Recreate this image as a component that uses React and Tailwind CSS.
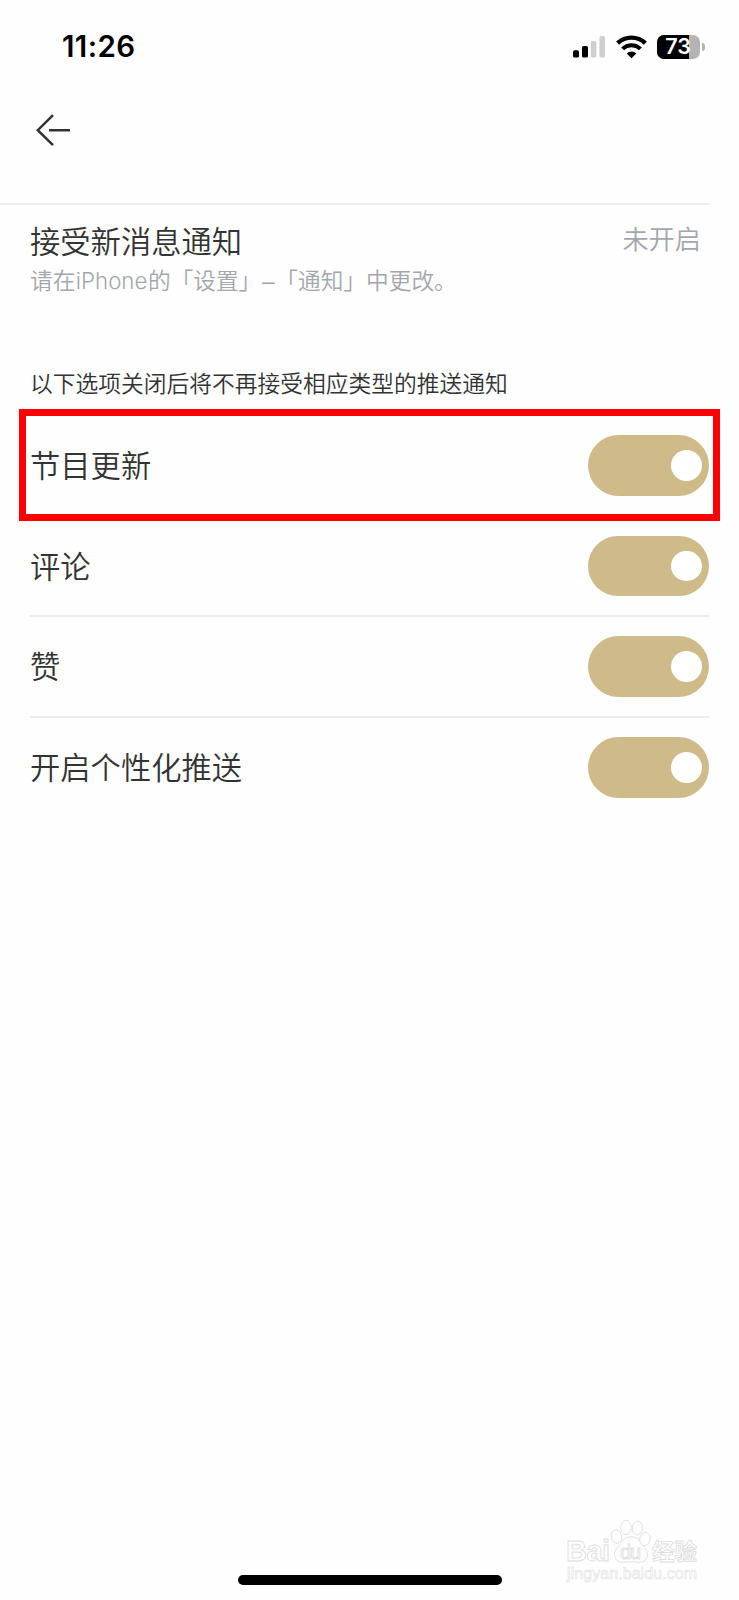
import React, { useState } from 'react';

const OPTIONS = [
    { key: 'program', label: '节目更新', divider: false },
    { key: 'comment', label: '评论', divider: true },
    { key: 'like', label: '赞', divider: true },
    { key: 'personal', label: '开启个性化推送', divider: false },
];

function StatusBar() {
    return (
        <div className="flex h-[94px] items-center justify-between pr-[34px] pl-[62px] text-black">
            <div className="font-['Inter'] text-[29.5px] leading-none font-semibold tracking-[0.4px]">11:26</div>
            <div className="flex items-center">
                {/* Signal */}
                <svg width="33" height="22" viewBox="0 0 33 22">
                    <rect x="0" y="14.2" width="6" height="7.4" rx="1.6" />
                    <rect x="9" y="10" width="6" height="11.6" rx="1.6" />
                    <rect x="17.8" y="5" width="5.6" height="16.6" rx="1.6" fill="#cfcfcf" />
                    <rect x="26.4" y="0" width="5.6" height="21.6" rx="1.6" fill="#cfcfcf" />
                </svg>
                {/* Wifi */}
                <svg className="ml-[10px]" width="31" height="24" viewBox="0 0 31 24" fill="none" stroke="#000">
                    <path d="M1.6 8.200a20.200 20.200 0 0 1 27.800 0" strokeWidth="4.400" />
                    <path d="M6.600 13.900a12.600 12.600 0 0 1 17.800 0" strokeWidth="4" />
                    <path d="M15.500 23.200l-4.800-4.800a6.800 6.800 0 0 1 9.600 0z" fill="#000" stroke="none" />
                </svg>
                {/* Battery */}
                <div className="relative ml-[10px] flex h-6 w-[43px] items-center justify-center overflow-hidden rounded-[7px] bg-[#b4b4b4]">
                    <div className="absolute inset-y-0 left-0 w-8 bg-black" />
                    <span className="relative -ml-px font-['Inter'] text-[21.5px] leading-none font-semibold text-white">73</span>
                </div>
                <div className="ml-[2px] h-2 w-[3px] rounded-r-full bg-[#b4b4b4]" />
            </div>
        </div>
    );
}

function Toggle({ checked, onChange }) {
    return (
        <button
            type="button"
            role="switch"
            aria-checked={checked}
            onClick={onChange}
            className={`flex h-[60.6px] w-[121.4px] items-center rounded-full px-[7.5px] ${
                checked ? 'justify-end bg-[#cfbb89]' : 'justify-start bg-gray-300'
            }`}
        >
            <span className="size-[30.6px] rounded-full bg-white" />
        </button>
    );
}

function Watermark() {
    return (
        <svg
            className="absolute right-[32px] bottom-[14px]"
            width="141"
            height="70"
            viewBox="0 0 141 70"
            fill="#fefefe"
            stroke="#dedede"
            strokeWidth="0.9"
        >
            <text x="0" y="45" fontFamily="Liberation Sans" fontWeight="700" fontSize="29" textLength="44">Bai</text>
            <ellipse cx="50.500" cy="20.500" rx="5.200" ry="6.800" transform="rotate(-12 50.500 20.500)" />
            <ellipse cx="60" cy="11.500" rx="5.200" ry="7.200" />
            <ellipse cx="71.500" cy="12" rx="5.200" ry="7" transform="rotate(8 71.500 12)" />
            <ellipse cx="79" cy="23" rx="5.200" ry="6.800" transform="rotate(14 79 23)" />
            <path d="M57 24.500c4-5 12-5 16 0 3 5 8 8 8.500 13 .5 6-4 9.500-9 8.800-6-.8-9-.8-15 0-5 .7-9.500-3-9-8.800.5-5 5.500-8 8.500-13z" />
            <text x="54" y="42.500" fontFamily="Liberation Sans" fontSize="20" textLength="21">du</text>
            <text x="86" y="44" fontFamily="Noto Sans CJK SC" fontWeight="700" fontSize="22.500" textLength="45">经验</text>
            <text x="1" y="62.500" fontFamily="Liberation Sans" fontSize="16" textLength="130" strokeWidth="0.6" stroke="#e2e2e2">jingyan.baidu.com</text>
        </svg>
    );
}

export default function App() {
    const [enabled, setEnabled] = useState({ program: true, comment: true, like: true, personal: true });

    const toggle = (key) => {
        setEnabled((prev) => ({ ...prev, [key]: !prev[key] }));
    };

    return (
        <div className="relative flex h-[1600px] w-[739px] flex-col overflow-hidden bg-[#fefefe] font-['Liberation_Sans','Noto_Sans_CJK_SC',sans-serif] text-[#333333]">
            <StatusBar />

            {/* Header */}
            <header className="mr-[30px] flex h-[111px] items-start border-b-2 border-[#ececec] pt-5 pl-9">
                <button type="button" aria-label="Back">
                    <svg width="35" height="33" viewBox="0 0 35 33" fill="none" stroke="#333" strokeWidth="2.500">
                        <path d="M17 1.200L1.800 16.200L17 31.200M13 16.200H34" />
                    </svg>
                </button>
            </header>

            {/* System notification state */}
            <section className="flex h-[166px] justify-between pt-[16px] pr-[38px] pl-[30px]">
                <div>
                    <h1 className="text-[30.3px] leading-[44px] font-[350]">接受新消息通知</h1>
                    <p className="-mt-[2px] text-[22.7px] leading-[36px] font-[350] text-[#a3a7ad]">
                        请在
                        <span className="inline-block w-[72.500px] text-center font-['Inter'] text-[22.300px] leading-none font-light">iPhone</span>
                        的「设置」
                        <span className="inline-block w-[14px] text-center">–</span>
                        「通知」中更改。
                    </p>
                </div>
                <span className="-mt-px text-[26.2px] leading-[40px] font-[350] text-[#a3a7ad]">未开启</span>
            </section>

            <p className="-mt-[4px] h-[49px] pl-[30px] text-[22.75px] leading-[34px] font-[350]">
                以下选项关闭后将不再接受相应类型的推送通知
            </p>

            {/* Push options */}
            <div className="relative pr-[30px] pl-[30px]">
                <ul>
                    {OPTIONS.map(({ key, label, divider }) => (
                        <li
                            key={key}
                            className={`flex h-[100.700px] items-center justify-between border-b-2 ${
                                divider ? 'border-[#ececec]' : 'border-transparent'
                            }`}
                        >
                            <span className="pt-[3px] text-[30.3px] leading-[44px] font-[350]">{label}</span>
                            <Toggle checked={enabled[key]} onChange={() => toggle(key)} />
                        </li>
                    ))}
                </ul>
                <div className="pointer-events-none absolute -top-[7px] left-[19px] h-[112px] w-[701px] border-[7.500px] border-[#ff0000]" />
            </div>

            <Watermark />
            {/* Home indicator */}
            <div className="mt-auto mb-[15px] h-[10px] w-[264px] self-center rounded-full bg-black" />
        </div>
    );
}
